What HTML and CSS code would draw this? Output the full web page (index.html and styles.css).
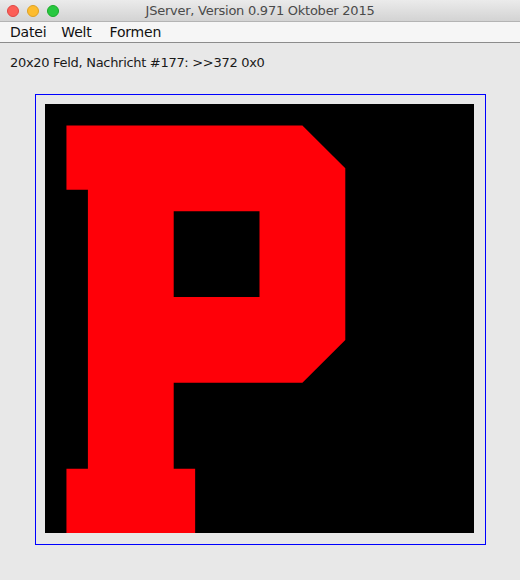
FILE: index.html
```html
<!DOCTYPE html>
<html>
<head>
<meta charset="utf-8">
<link rel="stylesheet" href="styles.css">
</head>
<body>
<div class="window">
  <div class="titlebar">
    <div class="lights">
      <span class="light red"></span>
      <span class="light yellow"></span>
      <span class="light green"></span>
    </div>
    <div class="title">JServer, Version 0.971 Oktober 2015</div>
  </div>
  <div class="menubar">
    <span class="menu">Datei</span>
    <span class="menu welt">Welt</span>
    <span class="menu">Formen</span>
  </div>
  <div class="content">
    <div class="status">20x20 Feld, Nachricht #177: &gt;&gt;372 0x0</div>
    <div class="frame">
      <svg class="board" width="429" height="429" viewBox="0 0 20 20" shape-rendering="crispEdges">
        <rect x="0" y="0" width="20" height="20" fill="#000"/>
        <path fill="#ff0008" fill-rule="evenodd" shape-rendering="geometricPrecision"
          d="M1 1 L12 1 L14 3 L14 11 L12 13 L6 13 L6 17 L7 17 L7 20 L1 20 L1 17 L2 17 L2 4 L1 4 Z M6 5 L6 9 L10 9 L10 5 Z"/>
      </svg>
    </div>
  </div>
</div>
</body>
</html>
```
FILE: styles.css
```css
html, body {
  margin: 0;
  padding: 0;
  background: #e8e8e8;
}
.window {
  width: 520px;
  height: 580px;
  background: #e8e8e8;
  font-family: "DejaVu Sans", "Lucida Grande", sans-serif;
  color: #1a1a1a;
  overflow: hidden;
}
.titlebar {
  position: relative;
  height: 21px;
  border-bottom: 1px solid #b4b4b4;
  background: linear-gradient(#ebebeb, #d3d3d3);
  display: flex;
  align-items: center;
  justify-content: center;
}
.lights {
  position: absolute;
  left: 7px;
  top: 5px;
  display: flex;
  gap: 8px;
}
.light {
  width: 12px;
  height: 12px;
  border-radius: 50%;
  box-sizing: border-box;
}
.light.red { background: #fc5f57; border: 1px solid #df4744; }
.light.yellow { background: #fdbc2e; border: 1px solid #dea123; }
.light.green { background: #28c840; border: 1px solid #1aab29; }
.title {
  font-size: 13px;
  color: #4a4a4a;
  letter-spacing: -0.25px;
}
.menubar {
  height: 20px;
  background: #f6f6f6;
  border-bottom: 1px solid #8c8c8c;
  display: flex;
  align-items: center;
  padding-left: 10px;
  gap: 15px;
  font-size: 14px;
  letter-spacing: -0.2px;
  color: #111;
}
.menu.welt {
  margin-right: 3px;
}
.content {
  padding-top: 11px;
}
.status {
  padding-left: 10px;
  font-size: 13px;
  line-height: 17px;
  color: #1a1a1a;
  letter-spacing: -0.3px;
}
.frame {
  margin-top: 23px;
  margin-left: 35px;
  width: 429px;
  height: 429px;
  padding: 9px 11px 11px 9px;
  border: 1px solid #0000ff;
}
.board {
  display: block;
}
```
